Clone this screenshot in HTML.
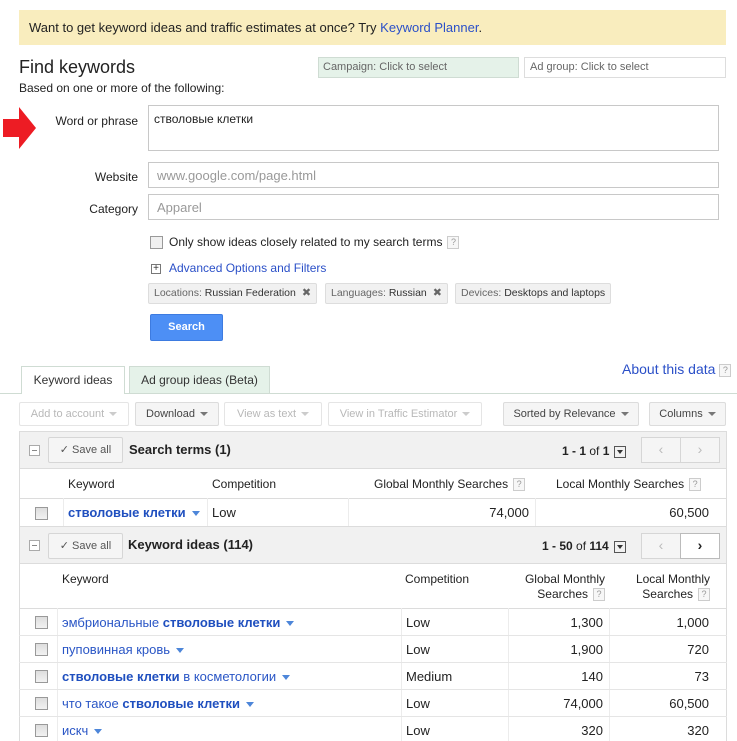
<!DOCTYPE html>
<html><head><meta charset="utf-8">
<style>
*{box-sizing:border-box;margin:0;padding:0}
body{width:737px;height:741px;overflow:hidden;background:#fff;font-family:"Liberation Sans",Arial,sans-serif;color:#222;position:relative;font-size:13px}
.a{position:absolute;white-space:nowrap}
.box{position:absolute;border:1px solid #d9d9d9;background:#fff}
.lbl{position:absolute;font-size:12px;color:#222;text-align:right;width:120px}
.btn{position:absolute;height:24px;border:1px solid #dcdcdc;background:#f5f5f5;border-radius:2px;font-size:11px;color:#444;line-height:22px;text-align:center;white-space:nowrap}
.btn.dis{background:#fff;color:#b8b8b8;border-color:#e5e5e5}
.car{display:inline-block;width:0;height:0;border-left:4px solid transparent;border-right:4px solid transparent;border-top:4px solid #777;vertical-align:middle;margin-left:5px}
.dis .car{border-top-color:#ccc}
.bcar{display:inline-block;width:0;height:0;border-left:4px solid transparent;border-right:4px solid transparent;border-top:5px solid #4d86d9;vertical-align:middle;margin-left:6px}
.cb{position:absolute;width:13px;height:13px;border:1px solid #999;background:linear-gradient(#ddd,#f2f2f2);}
.q{display:inline-block;width:12px;height:13px;border:1px solid #ccc;font-size:9px;color:#999;line-height:11px;text-align:center;vertical-align:middle;margin-left:5px;background:#f7f7f7}
.chip{position:absolute;top:283px;height:21px;border:1px solid #ddd;background:#f1f1f1;font-size:10.5px;color:#666;line-height:19px;padding:0 5px;border-radius:2px;white-space:nowrap}
.chip b{font-weight:normal;color:#333}
.x{color:#666;font-size:11px;margin-left:6px}
.hdr{position:absolute;left:19px;width:708px;background:#f1f1f1;border:1px solid #dcdcdc}
.minus{position:absolute;width:11px;height:11px;border:1px solid #aaa;background:#fff}
.minus:after{content:"";position:absolute;left:2px;top:4px;width:5px;height:1px;background:#888}
.save{position:absolute;width:75px;height:26px;border:1px solid #d6d6d6;background:#f5f5f5;font-size:11px;color:#555;line-height:24px;text-align:center;border-radius:2px}
.nav{position:absolute;top:0;width:40px;height:26px;border:1px solid #d6d6d6;background:#f5f5f5;color:#bbb;font-size:14px;text-align:center;line-height:23px}
.dd{display:inline-block;width:12px;height:12px;border:1px solid #555;vertical-align:middle;margin-left:5px;position:relative}
.dd:after{content:"";position:absolute;left:2px;top:3px;border-left:3px solid transparent;border-right:3px solid transparent;border-top:4px solid #333}
.hl{position:absolute;height:1px;background:#e5e5e5}
.vl{position:absolute;width:1px;background:#ececec}
.kw{color:#2a56c6;font-size:13px}
.kw b{color:#1f4fbf}
.r{text-align:right}
</style></head><body>

<div class="a" style="left:19px;top:10px;width:707px;height:35px;background:#f9edbe"></div>
<div class="a" style="left:29px;top:20px;font-size:13px;color:#222">Want to get keyword ideas and traffic estimates at once? Try <span style="color:#2b50c8">Keyword Planner</span>.</div>

<div class="a" style="left:19px;top:57px;font-size:18px;color:#222">Find keywords</div>
<div class="a" style="left:19px;top:81px;font-size:12px;color:#222">Based on one or more of the following:</div>
<div class="box" style="left:318px;top:57px;width:201px;height:21px;background:#e5f2e9;border-color:#cfdcd3"></div>
<div class="a" style="left:323px;top:61px;font-size:11px;color:#666">Campaign: Click to select</div>
<div class="box" style="left:524px;top:57px;width:202px;height:21px;background:#fff;border-color:#ddd"></div>
<div class="a" style="left:530px;top:61px;font-size:11px;color:#666">Ad group: Click to select</div>

<svg class="a" style="left:3px;top:107px" width="34" height="43" viewBox="0 0 34 43"><path d="M0 12 H16 V0 L33 21 L16 42 V30 H0 Z" fill="#ed1c24"/></svg>
<div class="lbl" style="left:18px;top:114px">Word or phrase</div>
<div class="box" style="left:148px;top:105px;width:571px;height:46px;border-color:#c8c8c8"></div>
<div class="a" style="left:154px;top:112px;font-size:12px;color:#222">стволовые клетки</div>

<div class="lbl" style="left:18px;top:170px">Website</div>
<div class="box" style="left:148px;top:162px;width:571px;height:26px;border-color:#c8c8c8"></div>
<div class="a" style="left:157px;top:168px;font-size:13px;color:#999">www.google.com/page.html</div>

<div class="lbl" style="left:18px;top:202px">Category</div>
<div class="box" style="left:148px;top:194px;width:571px;height:26px;border-color:#c8c8c8"></div>
<div class="a" style="left:157px;top:200px;font-size:13px;color:#999">Apparel</div>

<div class="cb" style="left:150px;top:236px;background:#f0f0f0"></div>
<div class="a" style="left:169px;top:235px;font-size:12px;color:#222">Only show ideas closely related to my search terms<span class="q">?</span></div>

<div class="a" style="left:151px;top:264px;width:10px;height:10px;border:1px solid #777;font-size:10px;line-height:8px;text-align:center;color:#333">+</div>
<div class="a" style="left:169px;top:261px;font-size:12px;color:#2b50c8">Advanced Options and Filters</div>

<div class="chip" style="left:148px">Locations: <b>Russian Federation</b><span class="x">✖</span></div>
<div class="chip" style="left:325px">Languages: <b>Russian</b><span class="x">✖</span></div>
<div class="chip" style="left:455px">Devices: <b>Desktops and laptops</b></div>

<div class="a" style="left:150px;top:314px;width:73px;height:27px;background:#4d8ff5;border:1px solid #3d7be0;border-radius:2px;color:#fff;font-weight:bold;font-size:11px;text-align:center;line-height:25px">Search</div>

<!-- tabs -->
<div class="a" style="left:0;top:393px;width:737px;height:1px;background:#cfdcd3"></div>
<div class="a" style="left:21px;top:366px;width:104px;height:28px;background:#fff;border:1px solid #cfdcd3;border-bottom:none;font-size:12px;color:#333;text-align:center;line-height:27px">Keyword ideas</div>
<div class="a" style="left:129px;top:366px;width:141px;height:27px;background:#e5f2e9;border:1px solid #cfdcd3;border-bottom:none;font-size:12px;color:#333;text-align:center;line-height:27px">Ad group ideas (Beta)</div>
<div class="a" style="left:622px;top:361px;font-size:14px;color:#2b50c8">About this data<span class="q" style="margin-left:4px">?</span></div>

<!-- toolbar -->
<div class="btn dis" style="left:19px;top:402px;width:110px">Add to account<span class="car"></span></div>
<div class="btn" style="left:135px;top:402px;width:84px">Download<span class="car"></span></div>
<div class="btn dis" style="left:224px;top:402px;width:98px">View as text<span class="car"></span></div>
<div class="btn dis" style="left:328px;top:402px;width:154px">View in Traffic Estimator<span class="car"></span></div>
<div class="btn" style="left:503px;top:402px;width:136px">Sorted by Relevance<span class="car"></span></div>
<div class="btn" style="left:649px;top:402px;width:77px">Columns<span class="car"></span></div>

<!-- search terms panel -->
<div class="hdr" style="top:431px;height:38px"></div>
<div class="minus" style="left:29px;top:445px"></div>
<div class="save" style="left:48px;top:437px">✓ Save all</div>
<div class="a" style="left:129px;top:442px;font-size:13px;font-weight:bold;color:#222">Search terms (1)</div>
<div class="a" style="left:562px;top:444px;font-size:12px;color:#222"><b>1 - 1</b> of <b>1</b><span class="dd"></span></div>
<div class="a" style="left:641px;top:437px;width:80px;height:26px">
 <div class="nav" style="left:0">‹</div><div class="nav" style="left:39px">›</div></div>

<div class="a" style="left:19px;top:468px;width:708px;height:58px;border-left:1px solid #dcdcdc;border-right:1px solid #dcdcdc"></div>
<div class="a" style="left:68px;top:477px;font-size:12px;color:#222">Keyword</div>
<div class="a" style="left:212px;top:477px;font-size:12px;color:#222">Competition</div>
<div class="a" style="left:374px;top:477px;font-size:12px;color:#222">Global Monthly Searches<span class="q">?</span></div>
<div class="a" style="left:556px;top:477px;font-size:12px;color:#222">Local Monthly Searches<span class="q">?</span></div>
<div class="hl" style="left:19px;top:498px;width:708px;background:#dcdcdc"></div>
<div class="vl" style="left:63px;top:498px;height:28px"></div>
<div class="vl" style="left:207px;top:498px;height:28px"></div>
<div class="vl" style="left:348px;top:498px;height:28px"></div>
<div class="vl" style="left:535px;top:498px;height:28px"></div>
<div class="cb" style="left:35px;top:507px"></div>
<div class="a kw" style="left:68px;top:505px"><b>стволовые клетки</b><span class="bcar"></span></div>
<div class="a" style="left:212px;top:505px;font-size:13px">Low</div>
<div class="a r" style="left:429px;width:100px;top:505px;font-size:13px">74,000</div>
<div class="a r" style="left:609px;width:100px;top:505px;font-size:13px">60,500</div>

<!-- keyword ideas panel -->
<div class="hdr" style="top:526px;height:38px"></div>
<div class="minus" style="left:29px;top:540px"></div>
<div class="save" style="left:48px;top:533px">✓ Save all</div>
<div class="a" style="left:128px;top:537px;font-size:13px;font-weight:bold;color:#222">Keyword ideas (114)</div>
<div class="a" style="left:542px;top:539px;font-size:12px;color:#222"><b>1 - 50</b> of <b>114</b><span class="dd"></span></div>
<div class="a" style="left:641px;top:533px;width:80px;height:26px">
 <div class="nav" style="left:0">‹</div><div class="nav" style="left:39px;background:#fff;color:#222;font-weight:bold;border-color:#bbb">›</div></div>

<div class="a" style="left:19px;top:563px;width:708px;height:178px;border-left:1px solid #dcdcdc;border-right:1px solid #dcdcdc"></div>
<div class="a" style="left:62px;top:572px;font-size:12px">Keyword</div>
<div class="a" style="left:405px;top:572px;font-size:12px">Competition</div>
<div class="a r" style="left:500px;width:105px;top:572px;font-size:12px;line-height:15px">Global Monthly<br>Searches<span class="q">?</span></div>
<div class="a r" style="left:605px;width:105px;top:572px;font-size:12px;line-height:15px">Local Monthly<br>Searches<span class="q">?</span></div>
<div class="hl" style="left:19px;top:608px;width:708px;background:#dcdcdc"></div>
<div class="vl" style="left:57px;top:608px;height:133px"></div>
<div class="vl" style="left:401px;top:608px;height:133px"></div>
<div class="vl" style="left:508px;top:608px;height:133px"></div>
<div class="vl" style="left:609px;top:608px;height:133px"></div>
<div class="hl" style="left:19px;top:635px;width:708px"></div>
<div class="hl" style="left:19px;top:662px;width:708px"></div>
<div class="hl" style="left:19px;top:689px;width:708px"></div>
<div class="hl" style="left:19px;top:716px;width:708px"></div>

<div class="cb" style="left:35px;top:616px"></div>
<div class="a kw" style="left:62px;top:615px">эмбриональные <b>стволовые клетки</b><span class="bcar"></span></div>
<div class="a" style="left:406px;top:615px">Low</div>
<div class="a r" style="left:503px;width:100px;top:615px">1,300</div>
<div class="a r" style="left:609px;width:100px;top:615px">1,000</div>

<div class="cb" style="left:35px;top:643px"></div>
<div class="a kw" style="left:62px;top:642px">пуповинная кровь<span class="bcar"></span></div>
<div class="a" style="left:406px;top:642px">Low</div>
<div class="a r" style="left:503px;width:100px;top:642px">1,900</div>
<div class="a r" style="left:609px;width:100px;top:642px">720</div>

<div class="cb" style="left:35px;top:670px"></div>
<div class="a kw" style="left:62px;top:669px"><b>стволовые клетки</b> в косметологии<span class="bcar"></span></div>
<div class="a" style="left:406px;top:669px">Medium</div>
<div class="a r" style="left:503px;width:100px;top:669px">140</div>
<div class="a r" style="left:609px;width:100px;top:669px">73</div>

<div class="cb" style="left:35px;top:697px"></div>
<div class="a kw" style="left:62px;top:696px">что такое <b>стволовые клетки</b><span class="bcar"></span></div>
<div class="a" style="left:406px;top:696px">Low</div>
<div class="a r" style="left:503px;width:100px;top:696px">74,000</div>
<div class="a r" style="left:609px;width:100px;top:696px">60,500</div>

<div class="cb" style="left:35px;top:724px"></div>
<div class="a kw" style="left:62px;top:723px">искч<span class="bcar"></span></div>
<div class="a" style="left:406px;top:723px">Low</div>
<div class="a r" style="left:503px;width:100px;top:723px">320</div>
<div class="a r" style="left:609px;width:100px;top:723px">320</div>

</body></html>
